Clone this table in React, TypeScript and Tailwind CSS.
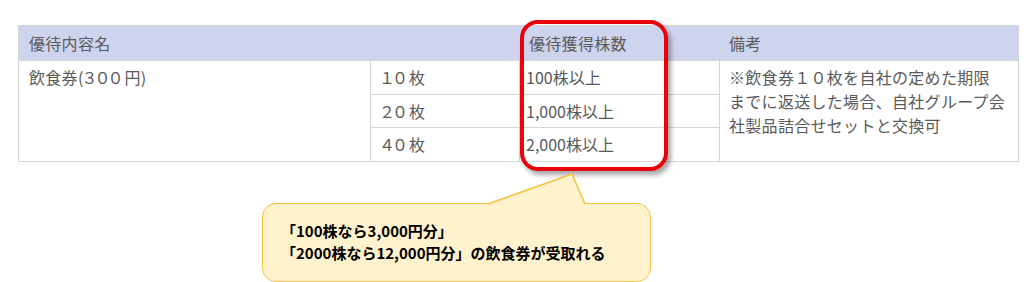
import React from 'react'

const jp = { fontFamily: '"Noto Sans CJK JP", "Noto Sans", sans-serif' }

const rows = [
  { qty: '１０', shares: '100株以上' },
  { qty: '２０', shares: '1,000株以上' },
  { qty: '４０', shares: '2,000株以上' },
]

export default function App() {
  return (
    <div className="relative w-[1024px] h-[282px] bg-white overflow-hidden" style={jp}>
      <div className="pl-[18px] pt-[25px]">
        <table className="w-[1000px] border-collapse table-fixed text-[16px] text-[#5a5a5a] tracking-[0.3px]">
          <colgroup>
            <col className="w-[352px]" />
            <col className="w-[149px]" />
            <col className="w-[200px]" />
            <col className="w-[299px]" />
          </colgroup>
          <thead>
            <tr className="h-[35px] bg-[#cfd4ee]">
              <th colSpan={2} className="border border-[#d6d6d6] text-left font-normal pl-[10px]">優待内容名</th>
              <th className="border border-[#d6d6d6] text-left font-normal pl-[9px]">優待獲得株数</th>
              <th className="border border-[#d6d6d6] text-left font-normal pl-[9px]">備考</th>
            </tr>
          </thead>
          <tbody>
            {rows.map((r, i) => (
              <tr key={i} className="h-[33.5px]">
                {i === 0 && (
                  <td rowSpan={3} className="border border-[#d6d6d6] align-top pl-[10px] pt-[4px]">
                    飲食券(<span className="-ml-[2px] tracking-[-3px]">３００</span> 円)
                  </td>
                )}
                <td className="border border-[#d6d6d6] pl-[8px]">
                  <span className="tracking-[-3px]">{r.qty}</span> 枚
                </td>
                <td className="border border-[#d6d6d6] pl-[6px] tracking-[0px]">{r.shares}</td>
                {i === 0 && (
                  <td rowSpan={3} className="border border-[#d6d6d6] align-top pl-[9px] pt-[4px] leading-[24px]">
                    ※飲食券１０枚を自社の定めた期限
                    <br />
                    までに返送した場合、自社グループ会
                    <br />
                    社製品詰合せセットと交換可
                  </td>
                )}
              </tr>
            ))}
          </tbody>
        </table>
      </div>

      {/* red highlight */}
      <div className="absolute left-[520px] top-[20px] w-[148px] h-[151px] border-[4px] border-[#e8000b] rounded-[18px] shadow-[3px_4px_5px_rgba(0,0,0,0.35)]" />

      {/* callout */}
      <div className="absolute left-[262px] top-[203px] w-[389px] h-[79px] bg-[#fff2cc] border-[1.5px] border-[#f5c242] rounded-[14px] pl-[18px] pt-[16px] text-[15px] font-bold text-black leading-[22px]">
        <div>「100株なら3,000円分」</div>
        <div>「2000株なら12,000円分」の飲食券が受取れる</div>
      </div>
      <svg className="absolute left-[480px] top-[170px]" width="112" height="40" viewBox="0 0 112 40">
        <polygon points="8,34.5 92,4 105,34.5" fill="#fff2cc" />
        <rect x="9" y="33" width="95" height="4" fill="#fff2cc" />
        <polyline points="8,34 92,4 105,34" fill="none" stroke="#f5c242" strokeWidth="1.5" />
      </svg>
    </div>
  )
}
